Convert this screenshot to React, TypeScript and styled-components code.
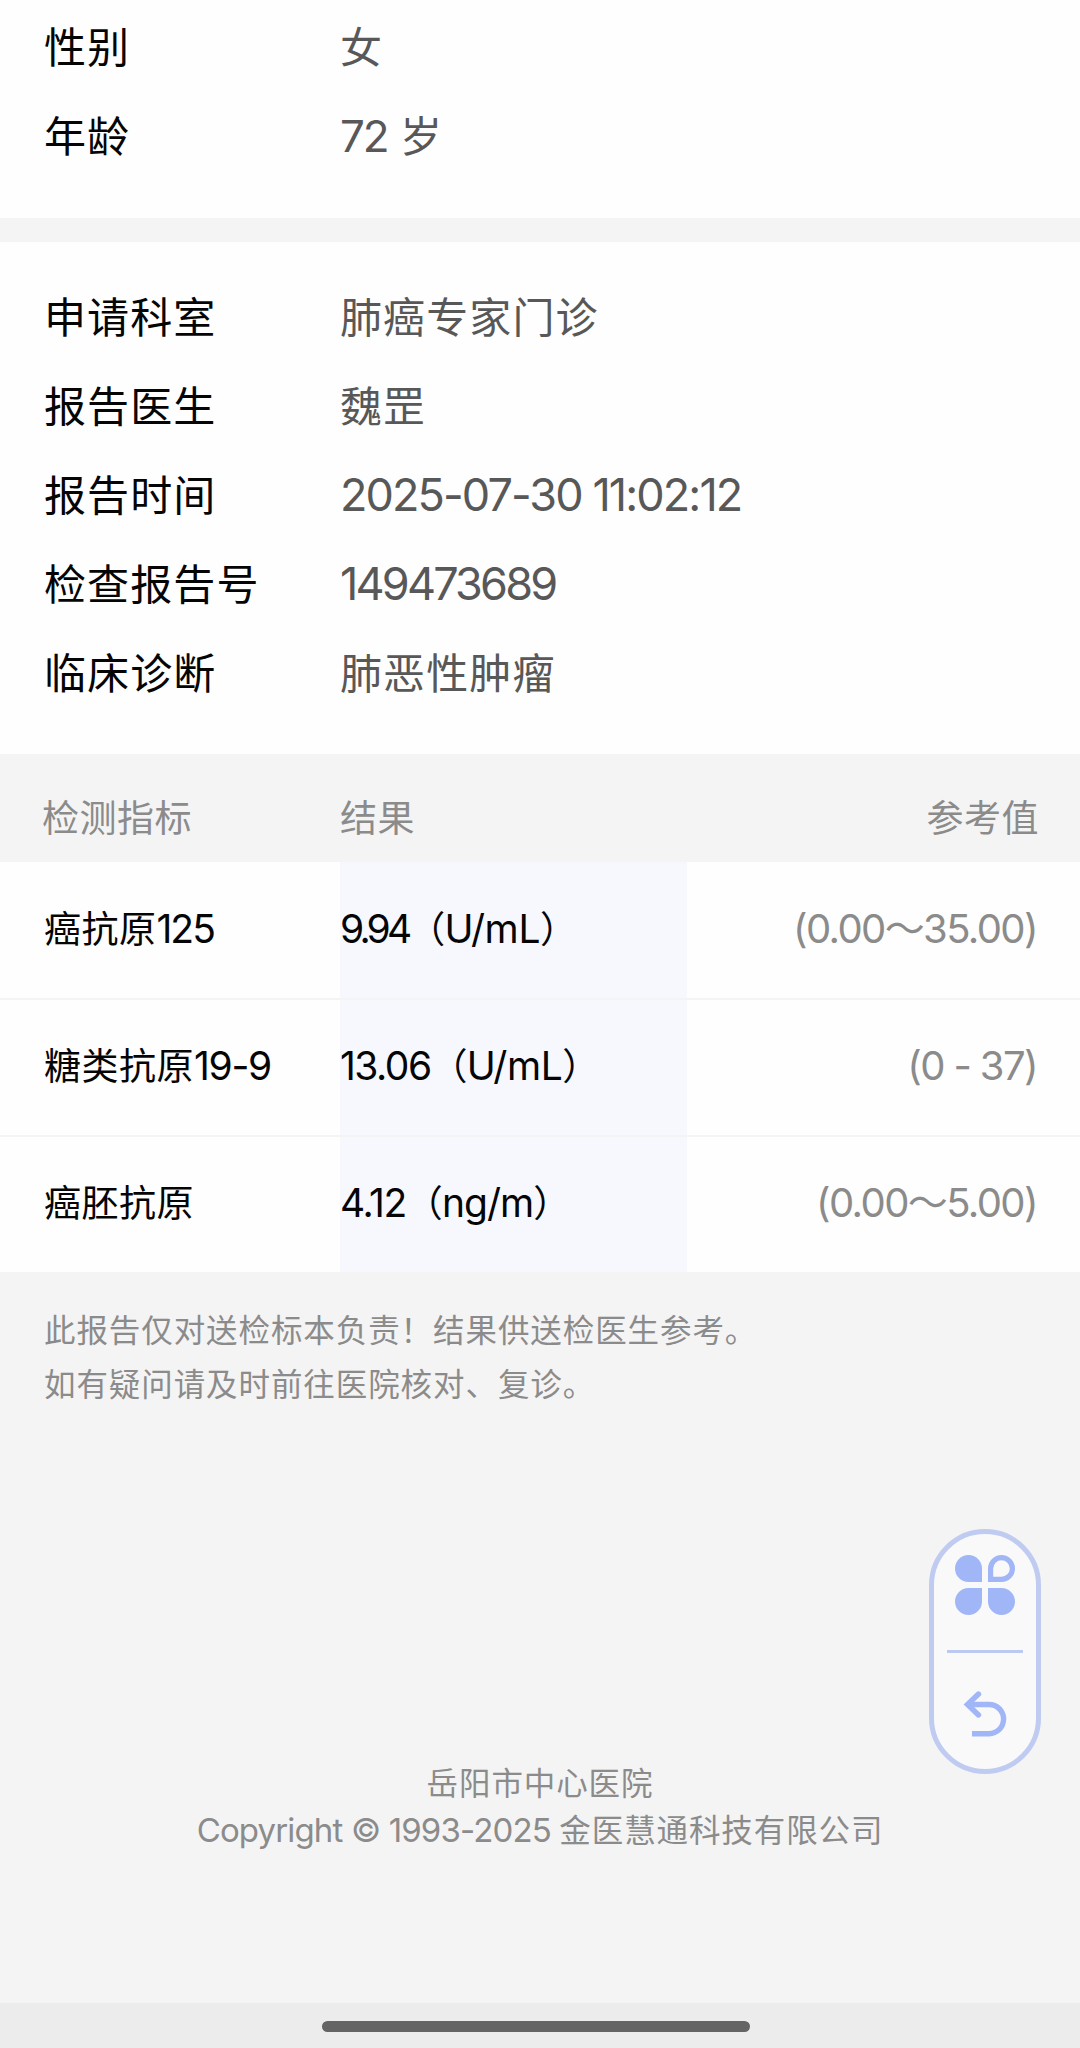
import React from "react";
import styled, { createGlobalStyle } from "styled-components";

const GlobalStyle = createGlobalStyle`
  * { box-sizing: border-box; }
  body {
    margin: 0;
    background: #f4f4f4;
    font-family: "Noto Sans CJK SC", sans-serif;
  }
`;

const Page = styled.div`
  width: 1080px;
  height: 2048px;
  overflow: hidden;
  display: flex;
  flex-direction: column;
  background: #f4f4f4;
`;

const InfoSection = styled.section<{ $top: number; $bottom: number }>`
  background: #fefefe;
  padding: ${(p) => p.$top}px 44px ${(p) => p.$bottom}px;
`;

const Divider = styled.div`
  height: 24px;
  flex: none;
`;

const InfoRow = styled.div`
  display: grid;
  grid-template-columns: 296px 1fr;
  height: 89px;
  line-height: 89px;
  font-size: 42px;
  letter-spacing: 1.1px;
  white-space: pre;
`;

const Label = styled.span`
  color: #050505;
`;

const Value = styled.span`
  color: #585858;
`;

const Latin = styled.span<{ $size: number; $track?: number }>`
  font-family: Inter, "Noto Sans CJK SC", sans-serif;
  font-size: ${(p) => p.$size}px;
  letter-spacing: ${(p) => p.$track ?? 0}px;
  line-height: 1;
`;

const TableHead = styled.div`
  display: grid;
  grid-template-columns: 298px 347px 1fr;
  height: 108px;
  padding: 19px 41px 0 42px;
  line-height: 86px;
  font-size: 37px;
  letter-spacing: 0.5px;
  color: #8b8b8b;
`;

const TableRow = styled.div<{ $first?: boolean }>`
  display: grid;
  grid-template-columns: 296px 347px 1fr;
  height: ${(p) => (p.$first ? 136 : 137)}px;
  border-top: ${(p) => (p.$first ? "none" : "2px solid #f4f4f5")};
  padding: 0 43px 0 44px;
  line-height: ${(p) => (p.$first ? 130 : 129)}px;
  font-size: 37px;
  letter-spacing: 0.5px;
  color: #050505;
  background: #fefefe;
  white-space: pre;
`;

const Result = styled.span`
  background: #f7f8fe;
`;

const Unit = styled.span`
  letter-spacing: -0.8px;
`;

const Reference = styled.span`
  color: #8b8b8b;
  text-align: right;
`;

const HeadReference = styled.span`
  text-align: right;
`;

const Notice = styled.p`
  margin: 0;
  padding: 29px 44px 0;
  font-size: 31.5px;
  line-height: 54px;
  letter-spacing: 0.92px;
  color: #8b8b8b;
  flex: 1;
`;

const Footer = styled.footer`
  height: 245px;
  text-align: center;
  font-size: 31.5px;
  line-height: 47px;
  letter-spacing: 0.9px;
  color: #8b8b8b;
  white-space: pre;
`;

const SystemBar = styled.div`
  height: 45px;
  flex: none;
  background: #ececec;
  padding: 18px 8px 0 0;
  display: flex;
  justify-content: center;
`;

const HomeIndicator = styled.div`
  width: 428px;
  height: 11px;
  border-radius: 6px;
  background: #646464;
`;

const FloatingMenu = styled.nav`
  position: fixed;
  left: 929px;
  top: 1529px;
  width: 112px;
  height: 245px;
  border: 5px solid #bfcbf1;
  border-radius: 56px;
  background: #f9f9f9;
  display: flex;
  flex-direction: column;
  align-items: center;
  padding-top: 21px;
`;

const MenuLine = styled.div`
  width: 76px;
  height: 3px;
  margin: 35px 0 37px;
  background: #bccaf2;
`;

const CloverIcon = () => (
  <svg width="60" height="60" viewBox="0 0 60 60" fill="#a1b6f7">
    <path d="M13.5 0A13.5 13.5 0 0 1 27 13.5V27H13.5A13.5 13.5 0 0 1 13.5 0Z" />
    <path d="M13.5 60A13.5 13.5 0 0 0 27 46.5V33H13.5A13.5 13.5 0 0 0 13.5 60Z" />
    <path d="M46.5 60A13.5 13.5 0 0 1 33 46.5V33H46.5A13.5 13.5 0 0 1 46.5 60Z" />
    <path
      d="M46.5 2.6A10.9 10.9 0 0 0 35.6 13.5V24.4H46.5A10.9 10.9 0 0 0 46.5 2.6Z"
      fill="none"
      stroke="#a1b6f7"
      strokeWidth="5.2"
    />
  </svg>
);

const BackIcon = () => (
  <svg width="44" height="48" viewBox="0 0 44 48" fill="none" stroke="#a1b6f7" strokeWidth="5.4">
    <path d="M15.5 4L4.5 14.5L15.5 25" strokeLinecap="round" strokeLinejoin="miter" />
    <path d="M5.5 14.5H26A14.6 14.6 0 0 1 26 43.7H9" />
  </svg>
);

interface Marker {
  name: string;
  suffix?: string;
  value: string;
  valueTrack: number;
  unit: string;
  unitTrack: number;
  range: string;
}

const markers: Marker[] = [
  { name: "癌抗原", suffix: "125", value: "9.94", valueTrack: -3.8, unit: "U/mL", unitTrack: -0.4, range: "(0.00～35.00)" },
  { name: "糖类抗原", suffix: "19-9", value: "13.06", valueTrack: -1.5, unit: "U/mL", unitTrack: -0.4, range: "(0 - 37)" },
  { name: "癌胚抗原", value: "4.12", valueTrack: -1.4, unit: "ng/m", unitTrack: -1, range: "(0.00～5.00)" },
];

export default function App() {
  return (
    <>
      <GlobalStyle />
      <Page>
        <InfoSection $top={0} $bottom={40}>
          <InfoRow>
            <Label>性别</Label>
            <Value>女</Value>
          </InfoRow>
          <InfoRow>
            <Label>年龄</Label>
            <Value><Latin $size={44} $track={-2.2}>72</Latin><Latin $size={45}> </Latin>岁</Value>
          </InfoRow>
        </InfoSection>
        <Divider />
        <InfoSection $top={28} $bottom={39}>
          <InfoRow>
            <Label>申请科室</Label>
            <Value>肺癌专家门诊</Value>
          </InfoRow>
          <InfoRow>
            <Label>报告医生</Label>
            <Value>魏罡</Value>
          </InfoRow>
          <InfoRow>
            <Label>报告时间</Label>
            <Value>
              <Latin $size={45} $track={-1.9}>2025-07-30 11:02:12</Latin>
            </Value>
          </InfoRow>
          <InfoRow>
            <Label>检查报告号</Label>
            <Value>
              <Latin $size={45} $track={-2.8}>149473689</Latin>
            </Value>
          </InfoRow>
          <InfoRow>
            <Label>临床诊断</Label>
            <Value>肺恶性肿瘤</Value>
          </InfoRow>
        </InfoSection>

        <TableHead>
          <span>检测指标</span>
          <span>结果</span>
          <HeadReference>参考值</HeadReference>
        </TableHead>
        {markers.map((m, i) => (
          <TableRow key={m.name} $first={i === 0}>
            <span>
              {m.name}
              {m.suffix && <Latin $size={39} $track={i === 0 ? -2 : -1.3}>{m.suffix}</Latin>}
            </span>
            <Result>
              <Latin $size={39} $track={m.valueTrack}>{m.value}</Latin>
              <Unit>（<Latin $size={39} $track={m.unitTrack}>{m.unit}</Latin>）</Unit>
            </Result>
            <Reference>
              <Latin $size={40} $track={-1.6}>{m.range}</Latin>
            </Reference>
          </TableRow>
        ))}

        <Notice>
          此报告仅对送检标本负责！结果供送检医生参考。
          <br />
          如有疑问请及时前往医院核对、复诊。
        </Notice>
        <Footer>
          <div>岳阳市中心医院</div>
          <div>
            <Latin $size={33} $track={-0.85}>Copyright © 1993-2025 </Latin>金医慧通科技有限公司
          </div>
        </Footer>
        <SystemBar>
          <HomeIndicator />
        </SystemBar>
      </Page>
      <FloatingMenu>
        <CloverIcon />
        <MenuLine />
        <BackIcon />
      </FloatingMenu>
    </>
  );
}
